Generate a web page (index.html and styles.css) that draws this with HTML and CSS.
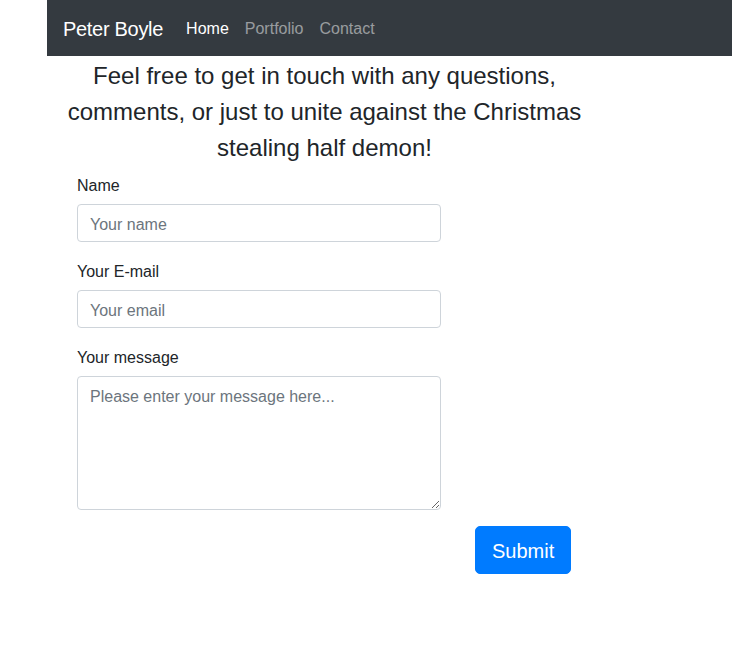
FILE: index.html
```html
<!DOCTYPE html>
<html lang="en">
<head>
<meta charset="utf-8">
<title>Contact - Peter Boyle</title>
<link rel="stylesheet" href="styles.css">
</head>
<body>
<div class="page">
  <nav class="navbar">
    <a class="brand" href="#">Peter Boyle</a>
    <ul class="nav">
      <li><a class="nav-link active" href="#">Home</a></li>
      <li><a class="nav-link" href="#">Portfolio</a></li>
      <li><a class="nav-link" href="#">Contact</a></li>
    </ul>
  </nav>
  <main class="main">
    <p class="intro">Feel free to get in touch with any questions, comments, or just to unite against the Christmas stealing half demon!</p>
    <form class="contact-form">
      <div class="form-group">
        <label for="name">Name</label>
        <input id="name" class="form-control" type="text" placeholder="Your name">
      </div>
      <div class="form-group">
        <label for="email">Your E-mail</label>
        <input id="email" class="form-control" type="email" placeholder="Your email">
      </div>
      <div class="form-group">
        <label for="msg">Your message</label>
        <textarea id="msg" class="form-control textarea" placeholder="Please enter your message here..."></textarea>
      </div>
      <div class="submit-row">
        <button type="submit" class="btn">Submit</button>
      </div>
    </form>
  </main>
</div>
</body>
</html>
```
FILE: styles.css
```css
* { box-sizing: border-box; }
html, body { margin: 0; padding: 0; background: #fff; }
body {
  font-family: "Liberation Sans", Arial, sans-serif;
  font-size: 16px;
  line-height: 1.5;
  color: #212529;
}
.page { padding-left: 47px; }
.navbar {
  background: #343a40;
  height: 56px;
  display: flex;
  align-items: center;
  padding: 2px 16px 0;
}
.brand {
  color: #fff;
  font-size: 20px;
  letter-spacing: -0.3px;
  text-decoration: none;
  margin-right: 15px;
  line-height: 30px;
}
.nav {
  list-style: none;
  display: flex;
  margin: 0;
  padding: 0;
}
.nav-link {
  display: block;
  padding: 8px;
  color: rgba(255,255,255,.5);
  text-decoration: none;
}
.nav-link.active { color: #fff; }
.main { width: 555px; }
.intro {
  margin: 2px 0 6px;
  text-align: center;
  font-size: 24px;
  line-height: 36px;
  padding: 0 12px;
}
.contact-form { padding-left: 30px; }
.form-group { margin-bottom: 16px; width: 364px; }
.form-group label {
  display: block;
  line-height: 24px;
  padding-top: 2px;
  margin-bottom: 6px;
}
.form-control {
  display: block;
  width: 100%;
  height: 38px;
  padding: 8px 12px 4px;
  font: inherit;
  font-size: 16px;
  line-height: 24px;
  color: #495057;
  border: 1px solid #ced4da;
  border-radius: 4px;
  background: #fff;
}
.form-control::placeholder { color: #6c757d; opacity: 1; }
.textarea { height: 134px; resize: vertical; }
.submit-row { padding-left: 398px; }
.btn {
  font: inherit;
  font-size: 20px;
  line-height: 30px;
  padding: 9px 16px 7px;
  color: #fff;
  background: #007bff;
  border: 1px solid #007bff;
  border-radius: 5px;
  cursor: pointer;
}
```
